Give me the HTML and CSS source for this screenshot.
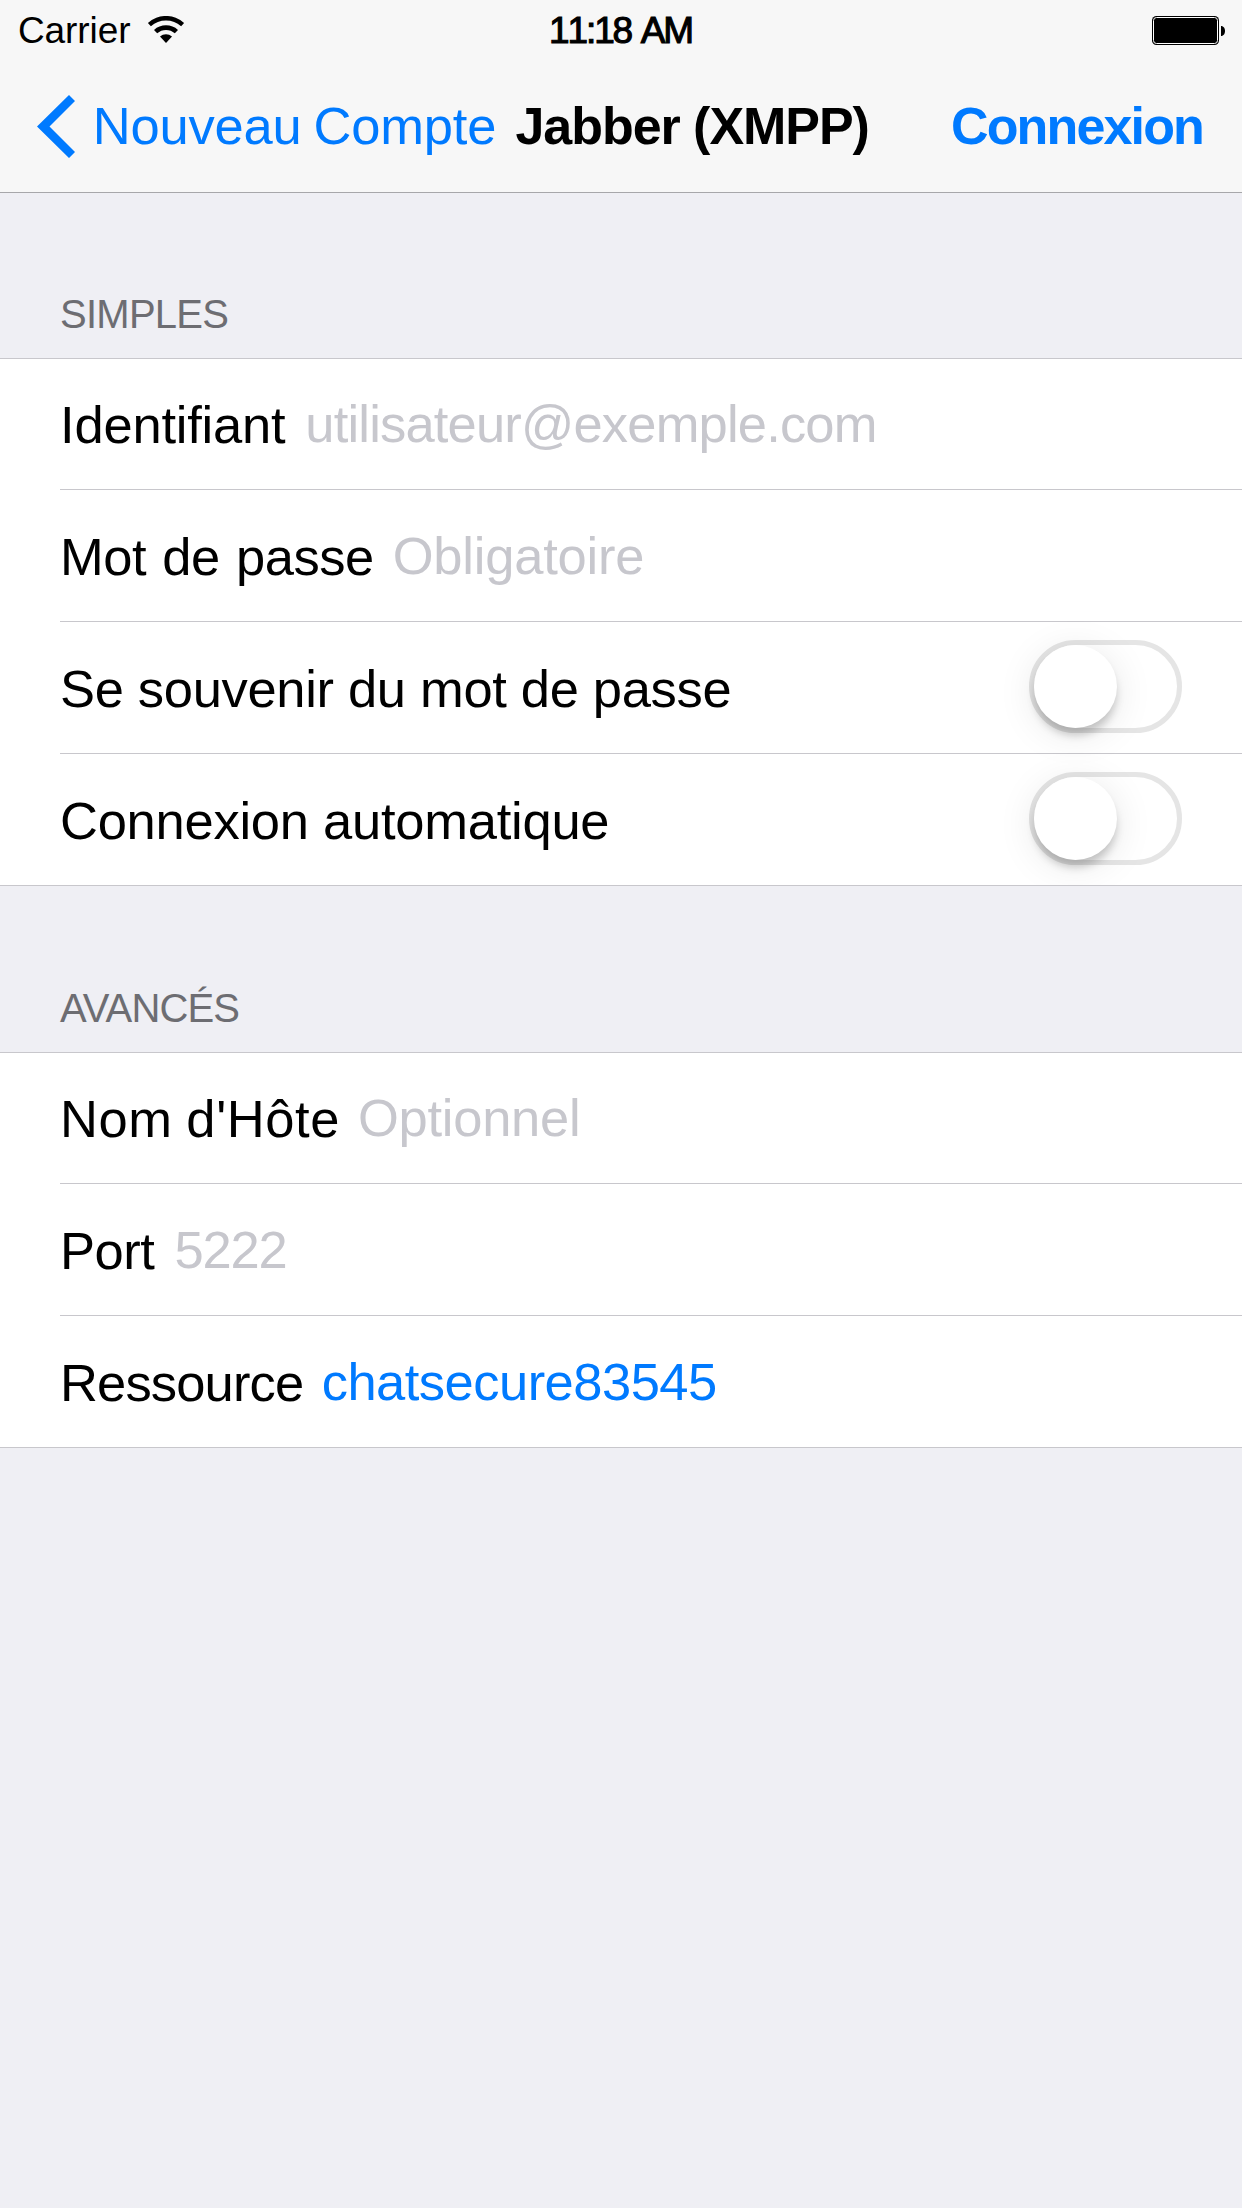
FILE: index.html
```
<!DOCTYPE html>
<html lang="fr">
<head>
  <meta charset="utf-8">
  <title>Jabber (XMPP)</title>
  <link rel="stylesheet" href="styles.css">
</head>
<body>
  <header class="top-bar">
    <div class="status">
      <div class="status-left">
        <span class="carrier">Carrier</span>
        <svg class="wifi" width="38" height="28" viewBox="0 0 38 28">
          <path d="M0.9 6.900a27 27 0 0 1 36.200 0l-3 3.300a22.700 22.700 0 0 0-30.200 0z"/>
          <path d="M7 13.900a17.800 17.800 0 0 1 24 0l-3.200 3.400a13.200 13.200 0 0 0-17.600 0z"/>
          <path d="M13 20.400a9.400 9.400 0 0 1 12 0l-6 6.500z"/>
        </svg>
      </div>
      <span class="clock">11:18 AM</span>
      <svg class="battery" width="74" height="29" viewBox="0 0 74 29">
        <rect x="0" y="0" width="67" height="29" rx="4.500" fill="#000"/>
        <rect x="1.500" y="1.500" width="64" height="26" rx="3" fill="none" stroke="#fff" stroke-width="1"/>
        <path d="M69 10c2.700 0 4 2.500 4 5s-1.300 5-4 5z"/>
      </svg>
    </div>
    <nav class="nav">
      <a class="back">
        <svg class="chevron" width="38" height="63" viewBox="0 0 38 63">
          <path d="M0 31.500 32 0 38 6 12.500 31.500 38 57 32 63z"/>
        </svg>
        <span class="back-label">Nouveau Compte</span>
      </a>
      <h1 class="title">Jabber (XMPP)</h1>
      <a class="connect">Connexion</a>
    </nav>
  </header>

  <main>
    <h2 class="section-title simple">SIMPLES</h2>
    <section class="group">
      <div class="row login"><span class="label">Identifiant</span><span class="value">utilisateur@exemple.com</span></div>
      <div class="row password"><span class="label">Mot de passe</span><span class="value">Obligatoire</span></div>
      <div class="row remember"><span class="label">Se souvenir du mot de passe</span><span class="switch"><span class="knob"></span></span></div>
      <div class="row auto"><span class="label">Connexion automatique</span><span class="switch"><span class="knob"></span></span></div>
    </section>

    <h2 class="section-title advanced">AVANCÉS</h2>
    <section class="group">
      <div class="row host"><span class="label">Nom d'Hôte</span><span class="value">Optionnel</span></div>
      <div class="row port"><span class="label">Port</span><span class="value">5222</span></div>
      <div class="row resource"><span class="label">Ressource</span><span class="value filled">chatsecure83545</span></div>
    </section>
  </main>
</body>
</html>
```
FILE: styles.css
```
* {
  box-sizing: border-box;
}

body {
  margin: 0;
  min-height: 2208px;
  background: #efeff4;
  color: #000;
  font-family: "Liberation Sans", Arial, sans-serif;
  font-size: 52.5px;
  white-space: nowrap;
}

/* Status and navigation bars */
.top-bar {
  height: 193px;
  background: #f7f7f7;
  border-bottom: 1px solid #a7a7aa;
}

.status {
  display: grid;
  grid-template-columns: 549px 1fr 90px;
  height: 60px;
  font-size: 37px;
  line-height: 62px;
}

.status-left {
  display: flex;
  padding-left: 18px;
}

.carrier {
  width: 129px;
  letter-spacing: -0.1px;
}

.wifi,
.battery {
  margin-top: 16px;
}

.clock {
  letter-spacing: -2.1px;
  word-spacing: 1.5px;
  font-kerning: none;
  -webkit-text-stroke: 1.1px #000;
}

.nav {
  display: grid;
  grid-template-columns: 515.5px 435.5px 1fr;
  height: 132px;
  line-height: 131px;
}

.back,
.connect {
  color: #007aff;
}

.back {
  display: flex;
  padding-left: 37px;
}

.chevron {
  margin: 35px 17.7px 0 0;
  fill: #007aff;
}

.back-label {
  letter-spacing: -0.18px;
  word-spacing: -2.5px;
}

.title,
.connect {
  margin: 0;
  font-size: 52px;
  font-weight: 700;
  line-height: 133px;
}

.title {
  letter-spacing: -1.05px;
}

.connect {
  letter-spacing: -1.85px;
}

/* Form sections */
.section-title {
  display: flex;
  align-items: flex-end;
  height: 166px;
  margin: 0;
  padding: 0 60px 24px;
  color: #6d6d72;
  font-size: 40px;
  font-weight: 400;
  line-height: 40px;
}

.simple {
  height: 165px;
  letter-spacing: -0.74px;
}

.advanced {
  letter-spacing: -0.9px;
}

/* Overflow keeps the last switch's shadow inside the white group */
.group {
  overflow: hidden;
  background: linear-gradient(#c8c7cc, #c8c7cc) top / 100% 1px no-repeat #fff;
  border-bottom: 1px solid #c8c7cc;
}

.row {
  display: flex;
  height: 132px;
  margin-left: 60px;
  border-bottom: 1px solid #c8c7cc;
}

.row:last-child {
  height: 131px;
  border-bottom: 0;
}

.label {
  line-height: 133px;
}

.value {
  color: #c7c7cd;
  line-height: 131px;
}

.filled {
  color: #007aff;
}

.login .label { width: 245.3px; letter-spacing: -0.2px; }
.login .value { letter-spacing: -0.82px; }
.password .label { width: 332.7px; letter-spacing: -0.45px; word-spacing: 2px; }
.password .value { letter-spacing: -0.21px; }
.remember .label { letter-spacing: -0.32px; }
.auto .label { letter-spacing: -0.25px; }
.host .label { width: 298px; letter-spacing: 0.6px; word-spacing: -1.5px; }
.host .value { letter-spacing: -0.26px; }
.port .label { width: 114.5px; letter-spacing: -0.5px; }
.port .value { letter-spacing: -1.2px; }
.resource .label { width: 261.7px; letter-spacing: -0.84px; }
.resource .value { letter-spacing: -0.52px; }

.switch {
  width: 153px;
  height: 93px;
  margin: 18px 60px 0 auto;
  border: 5px solid #e5e5e5;
  border-radius: 47px;
}

.knob {
  display: block;
  width: 83px;
  height: 83px;
  border-radius: 50%;
  background: #fff;
  box-shadow: 0 8px 8px -1px rgba(0, 0, 0, 0.2), 0 6px 38px rgba(0, 0, 0, 0.1);
}
```
